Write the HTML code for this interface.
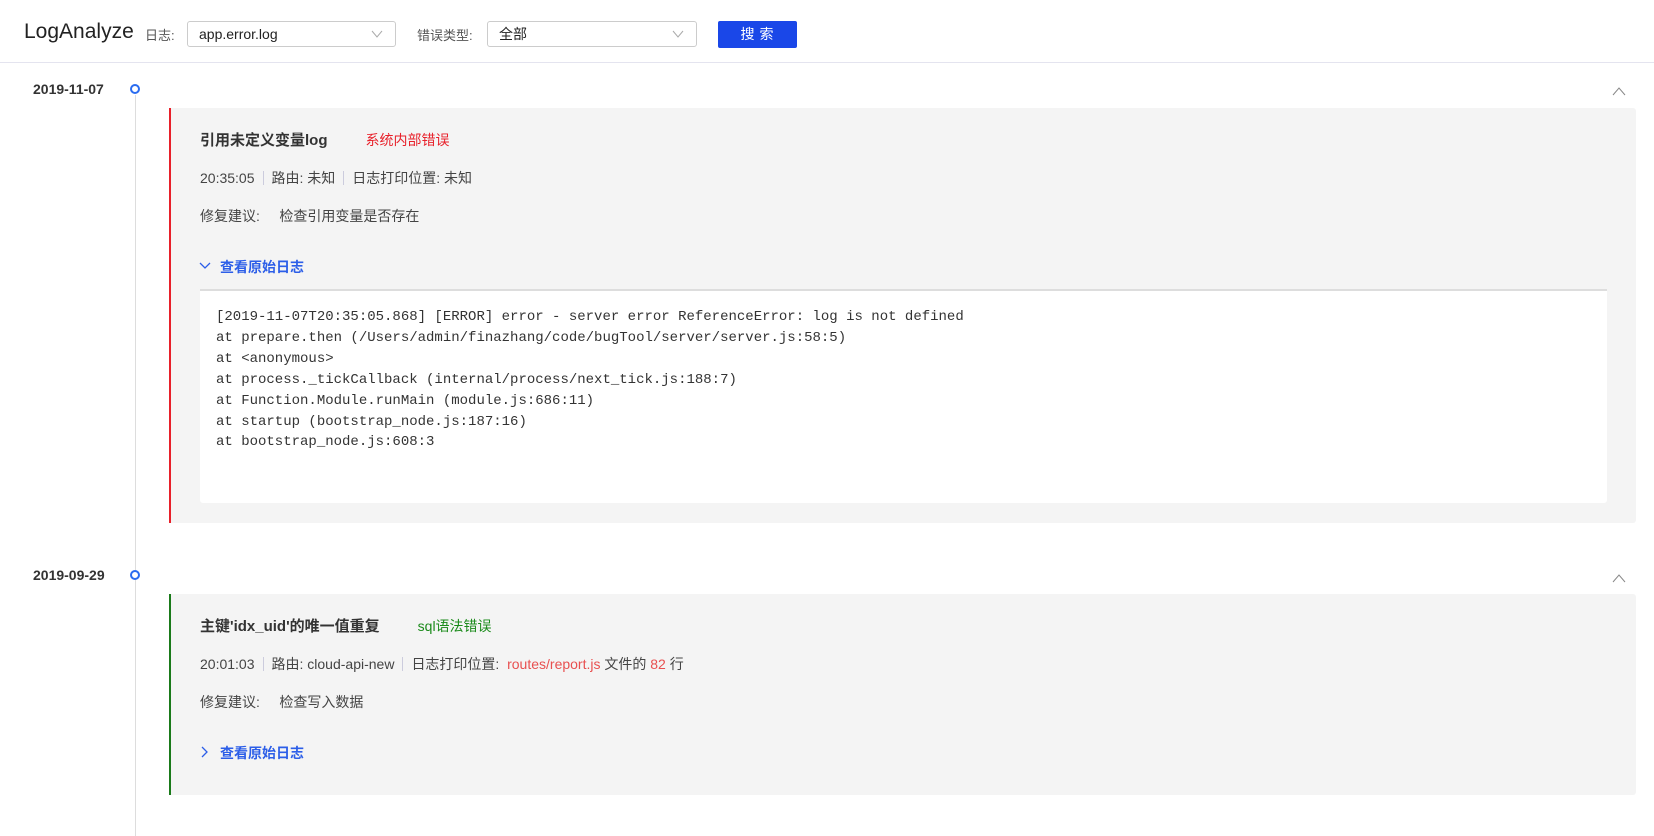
<!DOCTYPE html>
<html><head><meta charset="utf-8"><style>
*{margin:0;padding:0;box-sizing:border-box}
body{width:1654px;height:836px;overflow:hidden;background:#fff;font-family:"Liberation Sans","Noto Sans CJK SC",sans-serif;color:#333;position:relative}
.a{position:absolute;white-space:nowrap}
.sel{position:absolute;border:1px solid #ccc;border-radius:3px;height:26px;top:21px;font-size:14px;line-height:24px;padding-left:11px;color:#222}
.sel svg{position:absolute;right:12px;top:8px}
.card{position:absolute;left:169px;width:1467px;background:#f4f4f4;border-radius:0 3px 3px 0}
.t{font-size:15px;font-weight:bold;color:#333}
.m{font-size:14px;color:#444}
.sep{display:inline-block;width:1px;height:14px;background:#ccd;vertical-align:-2px;margin:0 8px}
.lnk{font-size:14px;font-weight:bold;color:#2c5ee8}
pre{font-family:"Liberation Mono",monospace;font-size:14px;line-height:20.9px;color:#333}
</style></head><body>
<div class="a" style="left:24px;top:20px;font-size:21px;color:#222">LogAnalyze</div>
<div class="a" style="left:145px;top:25px;font-size:13px;color:#555">日志:</div>
<div class="sel" style="left:187px;width:209px">app.error.log<svg width="12" height="8"><path d="M1 1L6 7L11 1" fill="none" stroke="#aaa"/></svg></div>
<div class="a" style="left:417px;top:25px;font-size:13px;color:#555">错误类型:</div>
<div class="sel" style="left:487px;width:210px">全部<svg width="12" height="8"><path d="M1 1L6 7L11 1" fill="none" stroke="#aaa"/></svg></div>
<div class="a" style="left:718px;top:21px;width:79px;height:27px;background:#1a47e8;border-radius:2px;color:#fff;font-size:14px;text-align:center;line-height:27px;letter-spacing:5px;padding-left:4px">搜索</div>
<div class="a" style="left:0;top:62px;width:1654px;height:1px;background:#e4e4ef"></div>
<div class="a" style="left:135px;top:95px;width:1px;height:741px;background:#ddd"></div>

<div class="a" style="left:33px;top:81px;font-size:14px;font-weight:bold;color:#333">2019-11-07</div>
<div class="a" style="left:130px;top:84px;width:10px;height:10px;border:2px solid #2a6cf0;border-radius:50%;background:#fff"></div>
<svg class="a" style="left:1612px;top:87px" width="14" height="9"><path d="M1 8L7 1L13 8" fill="none" stroke="#888"/></svg>
<div class="card" style="top:108px;height:415px;border-left:2px solid #e8202a">
 <div class="a t" style="left:29px;top:21px">引用未定义变量log<span style="color:#e8202a;font-weight:normal;font-size:14px;margin-left:38px">系统内部错误</span></div>
 <div class="a m" style="left:29px;top:60px">20:35:05<span class="sep"></span>路由: 未知<span class="sep"></span>日志打印位置: 未知</div>
 <div class="a m" style="left:29px;top:98px">修复建议:&nbsp;&nbsp;&nbsp;&nbsp;&nbsp;检查引用变量是否存在</div>
 <svg class="a" style="left:28px;top:154px" width="12" height="8"><path d="M1 1L6 6L11 1" fill="none" stroke="#2c5ee8" stroke-width="1.3"/></svg>
 <div class="a lnk" style="left:49px;top:149px">查看原始日志</div>
 <div class="a" style="left:29px;top:181px;width:1407px;height:214px;background:#fff;border-top:2px solid #ddd;border-radius:0 0 3px 3px">
  <pre style="position:absolute;left:16px;top:16px">[2019-11-07T20:35:05.868] [ERROR] error - server error ReferenceError: log is not defined
at prepare.then (/Users/admin/finazhang/code/bugTool/server/server.js:58:5)
at &lt;anonymous&gt;
at process._tickCallback (internal/process/next_tick.js:188:7)
at Function.Module.runMain (module.js:686:11)
at startup (bootstrap_node.js:187:16)
at bootstrap_node.js:608:3</pre>
 </div>
</div>

<div class="a" style="left:33px;top:567px;font-size:14px;font-weight:bold;color:#333">2019-09-29</div>
<div class="a" style="left:130px;top:570px;width:10px;height:10px;border:2px solid #2a6cf0;border-radius:50%;background:#fff"></div>
<svg class="a" style="left:1612px;top:574px" width="14" height="9"><path d="M1 8L7 1L13 8" fill="none" stroke="#888"/></svg>
<div class="card" style="top:594px;height:201px;border-left:2px solid #1a7a1a">
 <div class="a t" style="left:29px;top:21px">主键'idx_uid'的唯一值重复<span style="color:#1a8a1a;font-weight:normal;font-size:14px;margin-left:38px">sql语法错误</span></div>
 <div class="a m" style="left:29px;top:60px">20:01:03<span class="sep"></span>路由: cloud-api-new<span class="sep"></span>日志打印位置: &nbsp;<span style="color:#e85050">routes/report.js</span> 文件的 <span style="color:#e85050">82</span> 行</div>
 <div class="a m" style="left:29px;top:98px">修复建议:&nbsp;&nbsp;&nbsp;&nbsp;&nbsp;检查写入数据</div>
 <svg class="a" style="left:30px;top:152px" width="8" height="12"><path d="M1 1L6 6L1 11" fill="none" stroke="#2c5ee8" stroke-width="1.3"/></svg>
 <div class="a lnk" style="left:49px;top:149px">查看原始日志</div>
</div>
</body></html>
